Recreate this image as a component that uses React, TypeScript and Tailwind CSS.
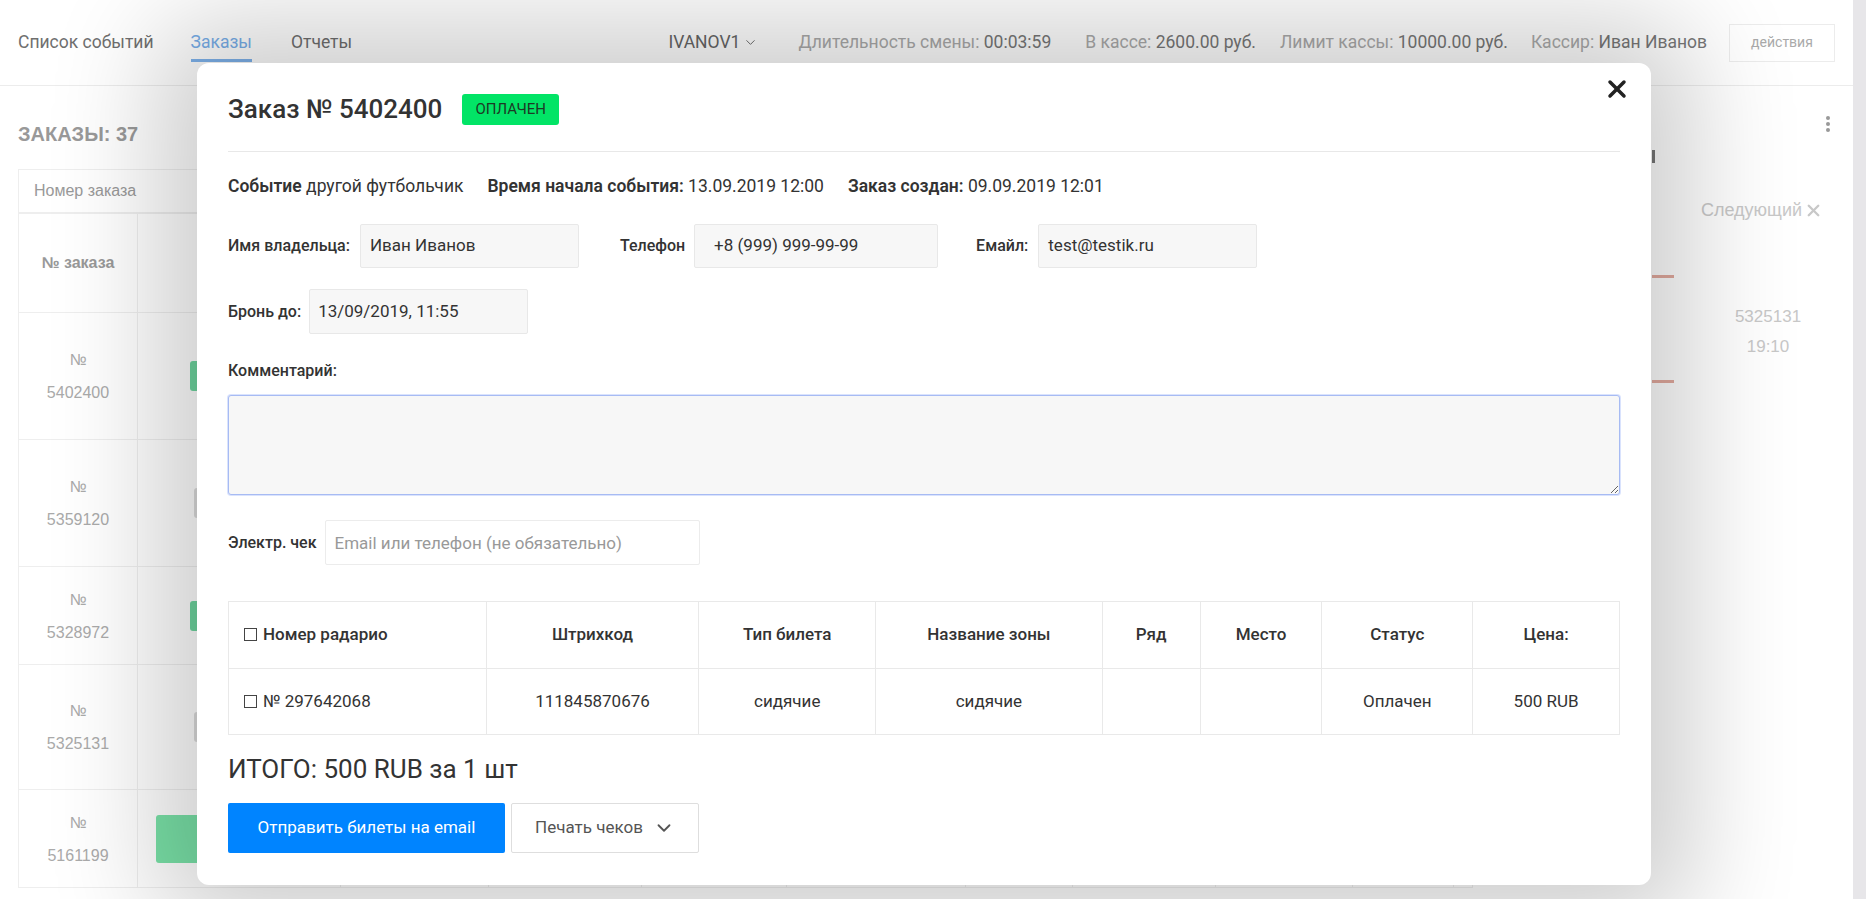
import { ChevronDown, X } from 'lucide-react';

const bgCols = [119, 203, 148, 153, 145, 179, 107, 143, 137, 101, 20];

type BgRow = { num: string; h: number; badge: 'green' | 'grey' | 'big' };

const bgRows: BgRow[] = [
  { num: '5402400', h: 127, badge: 'green' },
  { num: '5359120', h: 127, badge: 'grey' },
  { num: '5328972', h: 98, badge: 'green' },
  { num: '5325131', h: 125, badge: 'grey' },
  { num: '5161199', h: 98, badge: 'big' },
];

const modalCols = [
  { title: 'Номер радарио', w: 258 },
  { title: 'Штрихкод', w: 213 },
  { title: 'Тип билета', w: 177 },
  { title: 'Название зоны', w: 227 },
  { title: 'Ряд', w: 98 },
  { title: 'Место', w: 122 },
  { title: 'Статус', w: 151 },
  { title: 'Цена:', w: 147 },
];

const ticketRow = ['№ 297642068', '111845870676', 'сидячие', 'сидячие', '', '', 'Оплачен', '500 RUB'];

function Checkbox() {
  return <span className="mr-[6px] inline-block h-[13px] w-[13px] border-[1.5px] border-[#444] align-[-1px]" />;
}

function Header() {
  return (
    <header className="flex h-[86px] items-center border-b border-[#ececec] px-[18px] font-['Roboto',sans-serif] text-[17.5px]">
      <nav className="flex items-center">
        <span className="text-[#6f6f6f]">Список событий</span>
        <span className="relative ml-[37px] text-[#78aee9]">
          Заказы
          <span className="absolute -bottom-[6px] left-0 h-[3px] w-full bg-[#7fb3ec]" />
        </span>
        <span className="ml-[39px] text-[#6f6f6f]">Отчеты</span>
      </nav>
      <div className="ml-auto flex items-center">
        <span className="flex items-center text-[#666]">
          IVANOV1
          <ChevronDown className="ml-[3px] h-[15px] w-[15px]" strokeWidth={1.5} />
        </span>
        <span className="ml-[40px] text-[#aaa]">
          Длительность смены: <span className="text-[#777]">00:03:59</span>
        </span>
        <span className="ml-[34px] text-[#aaa]">
          В кассе: <span className="text-[#777]">2600.00 руб.</span>
        </span>
        <span className="ml-[24px] text-[#aaa]">
          Лимит кассы: <span className="text-[#777]">10000.00 руб.</span>
        </span>
        <span className="ml-[23px] text-[#aaa]">
          Кассир: <span className="text-[#777]">Иван Иванов</span>
        </span>
        <button className="ml-[22px] h-[38px] w-[106px] border border-[#ececec] bg-white text-[14px] text-[#aaa]">
          действия
        </button>
      </div>
    </header>
  );
}

function BackgroundTable() {
  return (
    <div className="font-['Liberation_Sans',Arial,sans-serif] text-[#aaa]">
      <div className="flex h-[100px] border border-[#eee]">
        {bgCols.map((w, i) => (
          <div key={i} style={{ width: w }} className="flex shrink-0 items-center justify-center border-r border-[#eee] last:border-r-0">
            {i === 0 && <span className="text-[16px] font-bold text-[#999]">№ заказа</span>}
          </div>
        ))}
      </div>
      {bgRows.map((r) => (
        <div key={r.num} style={{ height: r.h }} className="flex border-x border-b border-[#eee]">
          {bgCols.map((w, i) => (
            <div key={i} style={{ width: w }} className="flex shrink-0 items-center border-r border-[#eee] last:border-r-0">
              {i === 0 && (
                <div className="w-full text-center text-[16px] leading-[33px]">
                  <div>№</div>
                  <div>{r.num}</div>
                </div>
              )}
              {i === 1 && r.badge === 'green' && <div className="ml-[52px] h-[30px] w-[120px] rounded-[3px] bg-[#6fd6a0]" />}
              {i === 1 && r.badge === 'grey' && <div className="ml-[56px] h-[30px] w-[120px] rounded-[3px] bg-[#dcdcdc]" />}
              {i === 1 && r.badge === 'big' && <div className="ml-[18px] h-[48px] w-[170px] rounded-[3px] bg-[#7ae2a8]" />}
            </div>
          ))}
        </div>
      ))}
    </div>
  );
}

function RightPanel() {
  return (
    <div className="flex flex-1 flex-col font-['Liberation_Sans',Arial,sans-serif] text-[17px] text-[#c8c8c8]">
      <div className="flex justify-end pr-[4px] pt-[29px]">
        <svg width="6" height="18" viewBox="0 0 6 18" fill="#999">
          <circle cx="3" cy="3" r="2" />
          <circle cx="3" cy="9" r="2" />
          <circle cx="3" cy="15" r="2" />
        </svg>
      </div>
      <div className="ml-[179px] mt-[17px] h-[13px] w-[3px] bg-[#777]" />
      <div className="mt-[35px] flex h-[24px] items-center justify-end pr-[12px] text-[18px]">
        Следующий
        <X className="ml-[2px] h-[19px] w-[19px]" strokeWidth={3} />
      </div>
      <div className="ml-[179px] mt-[53px] h-[3px] w-[22px] bg-[#e3ab9f]" />
      <div className="ml-[235px] mt-[24px] w-[120px] text-center leading-[30px]">
        <div>5325131</div>
        <div>19:10</div>
      </div>
      <div className="ml-[179px] mt-[18px] h-[3px] w-[22px] bg-[#e3ab9f]" />
    </div>
  );
}

function OrderModal() {
  return (
    <div className="absolute left-[197px] top-[63px] flex h-[822px] w-[1454px] flex-col rounded-[12px] bg-white px-[31px] pt-[26px] font-['Roboto',sans-serif] text-[#333] shadow-[0_0_110px_40px_rgba(0,0,0,0.2)]">
      <button className="absolute right-[20px] top-[12px] text-[#222]">
        <X className="h-[28px] w-[28px]" strokeWidth={3} />
      </button>
      <div className="flex h-[40px] items-center">
        <h2 className="text-[26px] font-medium text-[#333]">Заказ № 5402400</h2>
        <span className="ml-[20px] flex h-[31px] items-center rounded-[3px] bg-[#02e466] px-[13px] text-[15px] uppercase text-[#1d3a25]">
          Оплачен
        </span>
      </div>
      <div className="mt-[22px] border-b border-[#e8e8e8]" />

      <div className="mt-[22px] flex h-[24px] items-center text-[17.5px]">
        <span>
          <b className="font-semibold">Событие</b> другой футбольчик
        </span>
        <span className="ml-[24px]">
          <b className="font-semibold">Время начала события:</b> 13.09.2019 12:00
        </span>
        <span className="ml-[24px]">
          <b className="font-semibold">Заказ создан:</b> 09.09.2019 12:01
        </span>
      </div>

      <div className="mt-[26px] flex h-[44px] items-center text-[16px] font-medium">
        <span>Имя владельца:</span>
        <div className="ml-[10px] flex h-full w-[219px] items-center rounded-[2px] border border-[#e8e8e8] bg-[#f7f7f7] px-[9px] text-[17px] font-normal">
          Иван Иванов
        </div>
        <span className="ml-[41px]">Телефон</span>
        <div className="ml-[9px] flex h-full w-[244px] items-center rounded-[2px] border border-[#e8e8e8] bg-[#f7f7f7] px-[19px] text-[17px] font-normal">
          +8 (999) 999-99-99
        </div>
        <span className="ml-[38px]">Емайл:</span>
        <div className="ml-[10px] flex h-full w-[219px] items-center rounded-[2px] border border-[#e8e8e8] bg-[#f7f7f7] px-[9px] text-[17px] font-normal">
          test@testik.ru
        </div>
      </div>

      <div className="mt-[21px] flex h-[45px] items-center text-[16px] font-medium">
        <span>Бронь до:</span>
        <div className="ml-[8px] flex h-full w-[219px] items-center rounded-[2px] border border-[#e8e8e8] bg-[#f7f7f7] px-[8px] text-[17px] font-normal">
          13/09/2019, 11:55
        </div>
      </div>

      <div className="mt-[27px] h-[20px] text-[16px] font-medium leading-[20px]">Комментарий:</div>
      <textarea className="mt-[14px] h-[100px] w-full rounded-[3px] border border-[#a7bbf3] bg-[#f7f7f7] shadow-[0_0_0_1px_rgba(150,175,250,0.35)] outline-none" />

      <div className="mt-[25px] flex h-[45px] items-center text-[16px] font-medium">
        <span>Электр. чек</span>
        <input
          placeholder="Email или телефон (не обязательно)"
          className="ml-[8px] h-full w-[375px] rounded-[2px] border border-[#ececec] bg-white px-[9px] text-[17px] font-normal outline-none placeholder:text-[#999]"
        />
      </div>

      <table className="mt-[36px] w-full border-collapse text-[17px]">
        <thead>
          <tr className="h-[67px]">
            {modalCols.map((c, i) => (
              <th
                key={c.title}
                style={{ width: c.w }}
                className={`border border-[#e9e9e9] font-medium ${i === 0 ? 'pl-[15px] text-left' : 'text-center'}`}
              >
                {i === 0 && <Checkbox />}
                {c.title}
              </th>
            ))}
          </tr>
        </thead>
        <tbody>
          <tr className="h-[66px]">
            {ticketRow.map((v, i) => (
              <td key={i} className={`border border-[#e9e9e9] ${i === 0 ? 'pl-[15px] text-left' : 'text-center'}`}>
                {i === 0 && <Checkbox />}
                {v}
              </td>
            ))}
          </tr>
        </tbody>
      </table>

      <div className="mt-[18px] h-[32px] text-[26px] leading-[32px] text-[#333]">ИТОГО: 500 RUB за 1 шт</div>

      <div className="mt-[18px] flex h-[50px] gap-[6px]">
        <button className="h-full w-[277px] rounded-[2px] bg-[#0084ff] text-[17px] text-white">Отправить билеты на email</button>
        <button className="flex h-full w-[188px] items-center justify-center rounded-[2px] border border-[#dedede] bg-white text-[17px] text-[#555]">
          Печать чеков
          <ChevronDown className="ml-[10px] h-[22px] w-[22px]" strokeWidth={2} />
        </button>
      </div>
    </div>
  );
}

export default function App() {
  return (
    <div className="relative flex h-[899px] w-full overflow-hidden bg-white">
      <div className="flex min-w-0 flex-1 flex-col">
        <Header />
        <div className="flex px-[18px]">
          <div className="w-[1455px] shrink-0">
            <div className="mt-[36px] h-[24px] font-['Liberation_Sans',Arial,sans-serif] text-[20px] font-bold leading-[24px] text-[#999]">
              ЗАКАЗЫ: 37
            </div>
            <div className="mt-[23px] flex h-[44px] items-center border border-[#eee] px-[15px] font-['Liberation_Sans',Arial,sans-serif] text-[16px] text-[#999]">
              Номер заказа
            </div>
            <BackgroundTable />
          </div>
          <RightPanel />
        </div>
      </div>
      <div className="w-[13px] shrink-0 bg-[#e7e6e9]" />
      <OrderModal />
    </div>
  );
}
